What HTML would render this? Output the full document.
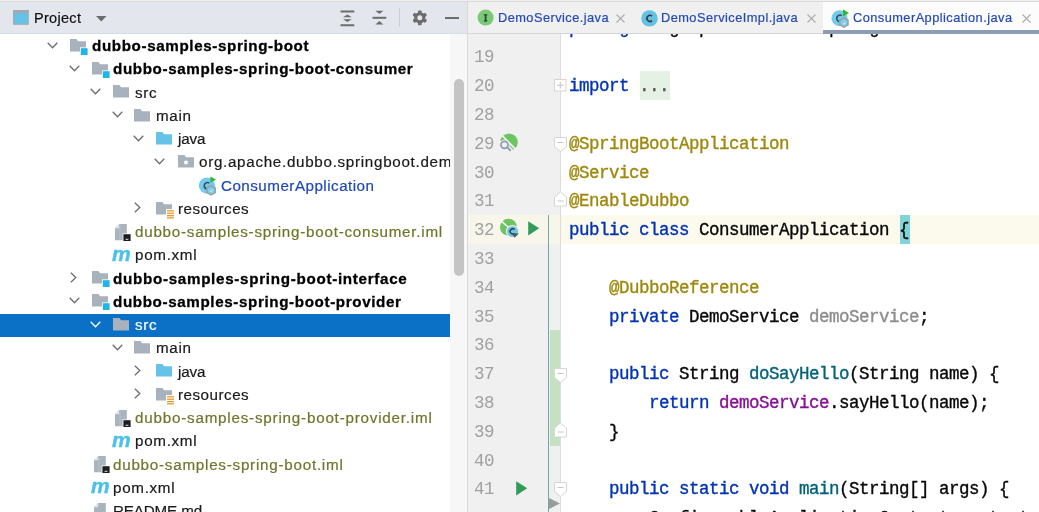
<!DOCTYPE html>
<html><head><meta charset="utf-8">
<style>
*{margin:0;padding:0;box-sizing:border-box}
.t,.cl,.ln,.tab{will-change:transform}
html,body{width:1039px;height:512px;overflow:hidden;background:#fff;font-family:"Liberation Sans",sans-serif}
.abs,.ic,.t{position:absolute}
#top{left:0;top:0;width:1039px;height:2px;background:#efefed;border-bottom:1px solid #d9d9d9}
#phead{left:0;top:2px;width:467px;height:32px;background:#e3e7ed;border-bottom:1px solid #d7dade}
#vdiv{left:467px;top:1px;width:1px;height:511px;background:#d9d9d9}
#tree{left:0;top:34px;width:467px;height:478px;background:#fff}
#track{left:450px;top:34px;width:17px;height:478px;background:#f7f7f7}
#thumb{left:453.6px;top:79px;width:10.6px;height:197px;background:#c4c4c4;border-radius:5.3px}
.t{height:23.2px;line-height:23.2px;font-size:15.2px;letter-spacing:0.7px;color:#1a1a1a;white-space:nowrap;margin-top:-0.8px;-webkit-text-stroke:0.2px currentColor}
.selbg{left:0;width:450px;height:23.25px;background:#0a71c6}
.t.w{color:#fff}
.t.b{font-weight:bold;letter-spacing:0.62px;color:#000;-webkit-text-stroke:0.3px currentColor}
.olive{color:#6f7529}
.blue{color:#1f48b8}
.mvn{font-family:"Liberation Sans",sans-serif;font-weight:bold;font-style:italic;font-size:21px;line-height:24px;color:#4bc0ea;letter-spacing:0;will-change:transform;-webkit-text-stroke:0.4px currentColor;margin-top:-0.5px}
#treeclip{left:0;top:34px;width:450px;height:478px;overflow:hidden}
#tabs{left:468px;top:2px;width:571px;height:32px;background:#f0f0f0;border-bottom:1px solid #d6d6d6}
.tab{position:absolute;top:1.8px;height:31px;font-size:12.8px;letter-spacing:0.45px;color:#2349b5;line-height:31px;white-space:nowrap;-webkit-text-stroke:0.2px currentColor}
#gutter{left:468px;top:34px;width:92.5px;height:478px;background:#f0f0f0}
#gline{left:560px;top:34px;width:1px;height:478px;background:#dcdcdc}
#code{left:561px;top:34px;width:478px;height:478px;background:#fff}
.cl{position:absolute;left:569.2px;width:520px;height:28.8px;line-height:28.8px;font-family:"Liberation Mono",monospace;font-size:17.5px;letter-spacing:-0.5px;white-space:pre;color:#080808;-webkit-text-stroke:0.35px currentColor;margin-top:-0.3px}
.ln{position:absolute;left:468px;width:26px;text-align:right;height:28.8px;line-height:28.8px;font-family:"Liberation Mono",monospace;font-size:17.5px;letter-spacing:-0.5px;color:#a0a0a0;margin-top:-0.3px}
.kw{color:#0033b3}
.an{color:#9e880d}
.fn{color:#00627a}
.fd{color:#871094}
.un{color:#8c8c8c}
.hic{position:absolute}
</style></head><body>
<!-- editor area -->
<div id="gutter" class="abs"></div>
<div id="code" class="abs"></div>
<div class="abs" style="left:468px;top:215.4px;width:571px;height:28.8px;background:#fcfaed"></div>
<div class="abs" style="left:468px;top:215.4px;width:92.5px;height:28.8px;background:#f8f6ea"></div>
<div id="gline" class="abs"></div>
<div class="abs" style="left:639.5px;top:71.4px;width:30px;height:28.8px;background:#e4f1e4"></div>
<div class="abs" style="left:900.2px;top:215.4px;width:10.1px;height:28.8px;background:#80d4d8"></div>

<div class="cl" style="top:14.1px"><span class="kw">package</span> org.apache.dubbo.springboot.demo.consumer;</div>
<div class="cl" style="top:72.4px"><span class="kw">import</span> <span style="color:#555">...</span></div>
<div class="cl an" style="top:130px">@SpringBootApplication</div>
<div class="cl an" style="top:158.8px">@Service</div>
<div class="cl an" style="top:187.6px">@EnableDubbo</div>
<div class="cl" style="top:216.4px"><span class="kw">public class</span> ConsumerApplication {</div>
<div class="cl" style="top:274px">    <span class="an">@DubboReference</span></div>
<div class="cl" style="top:302.8px">    <span class="kw">private</span> DemoService <span class="un">demoService</span>;</div>
<div class="cl" style="top:360.4px">    <span class="kw">public</span> String <span class="fn">doSayHello</span>(String name) {</div>
<div class="cl" style="top:389.2px">        <span class="kw">return</span> <span class="fd">demoService</span>.sayHello(name);</div>
<div class="cl" style="top:418px">    }</div>
<div class="cl" style="top:475.6px">    <span class="kw">public static void</span> <span class="fn">main</span>(String[] args) {</div>
<div class="cl" style="top:504.4px">        ConfigurableApplicationContext context = SpringApplication.run(ConsumerApplication.<span class="kw">class</span>, args);</div>

<div class="ln" style="top:43.6px">19</div>
<div class="ln" style="top:72.4px">20</div>
<div class="ln" style="top:101.2px">28</div>
<div class="ln" style="top:130px">29</div>
<div class="ln" style="top:158.8px">30</div>
<div class="ln" style="top:187.6px">31</div>
<div class="ln" style="top:216.4px">32</div>
<div class="ln" style="top:245.2px">33</div>
<div class="ln" style="top:274px">34</div>
<div class="ln" style="top:302.8px">35</div>
<div class="ln" style="top:331.6px">36</div>
<div class="ln" style="top:360.4px">37</div>
<div class="ln" style="top:389.2px">38</div>
<div class="ln" style="top:418px">39</div>
<div class="ln" style="top:446.8px">40</div>
<div class="ln" style="top:475.6px">41</div>

<!-- VCS markers -->
<div class="abs" style="left:548.2px;top:215px;width:1.3px;height:297px;background:#74a6b2"></div>
<div class="abs" style="left:549.5px;top:330.3px;width:10.7px;height:115.3px;background:#c6e0c2"></div>
<svg class="abs" style="left:549px;top:497.5px" width="12" height="12" viewBox="0 0 12 12"><path d="M0,0 L11,5.5 L0,11 Z" fill="#9b9b9b"/></svg>

<!-- fold markers -->
<svg class="abs" style="left:553.5px;top:78.9px" width="13" height="13" viewBox="0 0 13 13"><rect x="0.5" y="0.5" width="11.5" height="11.5" fill="#fff" stroke="#d6d6d6"/><path d="M3,6.25 H9.5 M6.25,3 V9.5" stroke="#c4c4c4" stroke-width="1"/></svg>
<svg class="abs fold-s" style="left:553.5px;top:137px" width="14" height="16" viewBox="0 0 14 16"><path d="M0.5,0.5 H12.5 V9.5 L6.5,14.5 L0.5,9.5 Z" fill="#fff" stroke="#d6d6d6"/><path d="M3.5,5.5 H9.5" stroke="#c4c4c4"/></svg>
<svg class="abs fold-e" style="left:553.5px;top:191px" width="14" height="16" viewBox="0 0 14 16"><path d="M0.5,15 H12.5 V6 L6.5,1 L0.5,6 Z" fill="#fff" stroke="#d6d6d6"/><path d="M3.5,10 H9.5" stroke="#c4c4c4"/></svg>
<svg class="abs fold-s" style="left:553.5px;top:367.5px" width="14" height="16" viewBox="0 0 14 16"><path d="M0.5,0.5 H12.5 V9.5 L6.5,14.5 L0.5,9.5 Z" fill="#fff" stroke="#d6d6d6"/><path d="M3.5,5.5 H9.5" stroke="#c4c4c4"/></svg>
<svg class="abs fold-e" style="left:553.5px;top:421.5px" width="14" height="16" viewBox="0 0 14 16"><path d="M0.5,15 H12.5 V6 L6.5,1 L0.5,6 Z" fill="#fff" stroke="#d6d6d6"/><path d="M3.5,10 H9.5" stroke="#c4c4c4"/></svg>
<svg class="abs fold-s" style="left:553.5px;top:482px" width="14" height="16" viewBox="0 0 14 16"><path d="M0.5,0.5 H12.5 V9.5 L6.5,14.5 L0.5,9.5 Z" fill="#fff" stroke="#d6d6d6"/><path d="M3.5,5.5 H9.5" stroke="#c4c4c4"/></svg>

<!-- gutter icons -->
<svg class="abs" style="left:499px;top:132.5px" width="20" height="19" viewBox="0 0 20 19">
<defs><clipPath id="sc1"><circle cx="0" cy="0" r="8.8"/></clipPath></defs>
<g clip-path="url(#sc1)" fill="#6cc561" transform="translate(10,9.2)">
<path d="M-12,-12.95 L12,11.05 L12,-13 L-12,-13 Z"/>
<path d="M-12,-10.1 L12,13.9 L12,15.4 L-12,-8.6 Z"/>
<path d="M-12,-10.1 L-4.2,-2.3 L-5.6,-1.2 L-12,-1.2 Z"/>
</g>
<g transform="translate(10,9.2)">
<circle cx="-4.5" cy="2.6" r="5.2" fill="#f0f0f0"/>
<path d="M-1.3,5.2 L1.6,8.3" stroke="#f0f0f0" stroke-width="3.6" stroke-linecap="round"/>

<circle cx="-4.5" cy="2.6" r="3.5" fill="none" stroke="#8e9aab" stroke-width="1.7"/>
<path d="M-1.8,5 L1.2,8.1" stroke="#8e9aab" stroke-width="1.9" stroke-linecap="round"/>
</g>
</svg>
<svg class="abs" style="left:499px;top:218px" width="21" height="21" viewBox="0 0 21 21">
<circle cx="9.5" cy="9.2" r="8.5" fill="#6cc561"/>
<path d="M1.8,2.6 L10.5,10.3" stroke="#f8f6ea" stroke-width="1.5" fill="none"/>
<circle cx="13.5" cy="13.5" r="6.6" fill="#f8f6ea"/>
<circle cx="13.5" cy="13.5" r="5.6" fill="#6cc8ea"/>
<path d="M15.6,11.6 A2.6,2.6 0 1 0 15.4,15.4" fill="none" stroke="#33424b" stroke-width="1.5"/>
<path d="M13,15.2 L19.8,15.6 L15.6,19.8 Z" fill="#555"/>
</svg>
<svg class="abs" style="left:528px;top:221px" width="12" height="15" viewBox="0 0 12 15"><path d="M0.2,0.3 L11.2,7.3 L0.2,14.6 Z" fill="#2f9d57"/></svg>
<svg class="abs" style="left:515.5px;top:481px" width="12" height="15" viewBox="0 0 12 15"><path d="M0.2,0.3 L11.2,7.3 L0.2,14.6 Z" fill="#2f9d57"/></svg>

<!-- tab bar -->
<div id="tabs" class="abs"></div>
<div class="abs" style="left:822.7px;top:2px;width:216.3px;height:31.5px;background:#fcfcfc"></div>
<div class="abs" style="left:822.7px;top:30px;width:216.3px;height:3.5px;background:#8d9cb2"></div>
<svg class="abs" style="left:476.5px;top:9px" width="18" height="18" viewBox="0 0 18 18"><circle cx="8.6" cy="8.6" r="8" fill="#78ca74"/><path d="M6.9,5.9 H10.3 M6.9,11.9 H10.3" stroke="#334033" stroke-width="1.3"/><path d="M8.6,5.6 V12.2" stroke="#334033" stroke-width="1.7"/></svg>
<div class="tab" style="left:497.9px">DemoService.java</div>
<svg class="abs" style="left:616.2px;top:13.6px" width="9" height="9" viewBox="0 0 9 9"><path d="M0.5,0.5 L8.5,8.5 M8.5,0.5 L0.5,8.5" stroke="#acacac" stroke-width="1.1"/></svg>
<svg class="abs" style="left:640.5px;top:9.5px" width="18" height="18" viewBox="0 0 18 18"><circle cx="8.5" cy="8.4" r="8.2" fill="#60c2e4"/><path d="M11,6.2 A3,3 0 1 0 11,10.6" fill="none" stroke="#3a3a3a" stroke-width="1.6"/></svg>
<div class="tab" style="left:661.2px">DemoServiceImpl.java</div>
<svg class="abs" style="left:807.1px;top:13.6px" width="9" height="9" viewBox="0 0 9 9"><path d="M0.5,0.5 L8.5,8.5 M8.5,0.5 L0.5,8.5" stroke="#acacac" stroke-width="1.1"/></svg>
<svg class="abs" style="left:831px;top:8.5px" width="20" height="20" viewBox="0 0 20 20">
<circle cx="8.5" cy="9.2" r="8" fill="#72ccef"/>
<path d="M10.8,6.6 A3.3,3.3 0 1 0 10.4,12.4" fill="none" stroke="#3a4a52" stroke-width="1.6"/>
<path d="M12,0.3 L17.9,3.9 L12,7.6 Z" fill="#35b52f"/>
<g transform="translate(12.9,13.6)"><path d="M0,-4.6 L4.1,-2.3 V2.3 L0,4.6 L-4.1,2.3 V-2.3 Z" fill="#7ad0ee" stroke="#9aa1a8" stroke-width="1.6"/>
<path d="M-1.2,0.6 L0,1.6 L1.8,-0.8" fill="none" stroke="#e8eef2" stroke-width="0.9"/></g>
</svg>
<div class="tab" style="left:853px">ConsumerApplication.java</div>
<svg class="abs" style="left:1022px;top:13.6px" width="9" height="9" viewBox="0 0 9 9"><path d="M0.5,0.5 L8.5,8.5 M8.5,0.5 L0.5,8.5" stroke="#acacac" stroke-width="1.1"/></svg>

<!-- project header -->
<div id="top" class="abs"></div>
<div id="phead" class="abs"></div>
<div id="vdiv" class="abs"></div>
<svg class="abs" style="left:12.8px;top:9.8px" width="17" height="16" viewBox="0 0 17 16"><rect x="0.6" y="0.6" width="14.6" height="13.6" fill="#62c4e8" stroke="#a3a9af" stroke-width="1.2"/><rect x="0.6" y="0.6" width="14.6" height="2.6" fill="#a3a9af"/></svg>
<div class="abs" style="left:34.3px;top:2.5px;height:31px;line-height:31px;font-size:14.5px;letter-spacing:0.3px;color:#111;will-change:transform;-webkit-text-stroke:0.2px currentColor">Project</div>
<svg class="abs" style="left:96.2px;top:15.6px" width="11" height="6" viewBox="0 0 11 6"><path d="M0,0 H10.5 L5.25,5.6 Z" fill="#6c6c6c"/></svg>
<svg class="abs" style="left:340px;top:9.5px" width="15" height="17" viewBox="0 0 15 17"><path d="M0.5,1.4 H14.3 M0.5,15.2 H14.3" stroke="#6c6c6c" stroke-width="2"/><path d="M3,7.3 L7.4,4.6 L11.8,7.3 Z M3,9.3 L7.4,12 L11.8,9.3 Z" fill="#6c6c6c"/></svg>
<svg class="abs" style="left:371.5px;top:10px" width="15" height="16" viewBox="0 0 15 16"><path d="M0.5,7.8 H14.3" stroke="#6c6c6c" stroke-width="2"/><path d="M3.4,0.8 L7.4,4.1 L11.4,0.8 Z M3.4,14.6 L7.4,11 L11.4,14.6 Z" fill="#6c6c6c"/></svg>
<div class="abs" style="left:399px;top:7.5px;width:1px;height:19.5px;background:#cbcfd5"></div>
<svg class="abs" style="left:412px;top:10px" width="16" height="16" viewBox="0 0 16 16"><g fill="#6c6c6c" transform="translate(7.8,7.8)"><circle r="5.6"/><rect x="-1.8" y="-7.4" width="3.6" height="14.8" rx="0.8"/><rect x="-1.8" y="-7.4" width="3.6" height="14.8" rx="0.8" transform="rotate(60)"/><rect x="-1.8" y="-7.4" width="3.6" height="14.8" rx="0.8" transform="rotate(120)"/></g><circle cx="7.8" cy="7.8" r="2.5" fill="#e3e7ed"/></svg>
<div class="abs" style="left:444.5px;top:16.8px;width:14.2px;height:2.3px;background:#6c6c6c"></div>

<!-- tree -->
<div id="tree" class="abs"></div>
<div id="treeclip" class="abs">
<div class="abs" style="left:0;top:-34px;width:450px;height:512px">
<svg class="ic" style="left:47.2px;top:41.58px" width="11" height="7" viewBox="0 0 11 7"><polyline points="0.7,0.8 5.5,5.8 10.3,0.8" fill="none" stroke="#6e6e6e" stroke-width="1.3"/></svg>
<svg class="ic" style="left:70.30000000000001px;top:39.27px" width="18" height="17" viewBox="0 0 18 17"><path d="M0,0 H6.5 L8,2.2 H16 V12.6 H0 Z" fill="#a8b2bc"/><rect x="10" y="8.4" width="7.6" height="7.6" fill="#fff"/><rect x="10.8" y="9.2" width="6.8" height="6.8" fill="#20b4e8"/></svg>
<div class="t b" style="left:91.90px;top:34.95px">dubbo-samples-spring-boot</div>
<svg class="ic" style="left:68.64px;top:64.83px" width="11" height="7" viewBox="0 0 11 7"><polyline points="0.7,0.8 5.5,5.8 10.3,0.8" fill="none" stroke="#6e6e6e" stroke-width="1.3"/></svg>
<svg class="ic" style="left:91.74000000000001px;top:61.73px" width="18" height="17" viewBox="0 0 18 17"><path d="M0,0 H6.5 L8,2.2 H16 V12.6 H0 Z" fill="#a8b2bc"/><rect x="10" y="8.4" width="7.6" height="7.6" fill="#fff"/><rect x="10.8" y="9.2" width="6.8" height="6.8" fill="#20b4e8"/></svg>
<div class="t b" style="left:113.34px;top:58.20px">dubbo-samples-spring-boot-consumer</div>
<svg class="ic" style="left:90.08px;top:88.08px" width="11" height="7" viewBox="0 0 11 7"><polyline points="0.7,0.8 5.5,5.8 10.3,0.8" fill="none" stroke="#6e6e6e" stroke-width="1.3"/></svg>
<svg class="ic" style="left:112.88px;top:85.28px" width="18" height="15" viewBox="0 0 18 15"><path d="M0,0 H6.5 L8,2.2 H16 V12.6 H0 Z" fill="#a8b2bc"/></svg>
<div class="t" style="left:134.78px;top:81.45px">src</div>
<svg class="ic" style="left:111.52000000000002px;top:111.33px" width="11" height="7" viewBox="0 0 11 7"><polyline points="0.7,0.8 5.5,5.8 10.3,0.8" fill="none" stroke="#6e6e6e" stroke-width="1.3"/></svg>
<svg class="ic" style="left:134.32000000000002px;top:108.53px" width="18" height="15" viewBox="0 0 18 15"><path d="M0,0 H6.5 L8,2.2 H16 V12.6 H0 Z" fill="#a8b2bc"/></svg>
<div class="t" style="left:156.22px;top:104.70px">main</div>
<svg class="ic" style="left:132.96000000000004px;top:134.57px" width="11" height="7" viewBox="0 0 11 7"><polyline points="0.7,0.8 5.5,5.8 10.3,0.8" fill="none" stroke="#6e6e6e" stroke-width="1.3"/></svg>
<svg class="ic" style="left:156.16000000000003px;top:131.77px" width="18" height="15" viewBox="0 0 18 15"><path d="M0,0 H6.5 L8,2.2 H16 V12.6 H0 Z" fill="#66c2e8"/></svg>
<div class="t" style="left:177.66px;top:127.95px;letter-spacing:-0.1px">java</div>
<svg class="ic" style="left:154.40000000000003px;top:157.82px" width="11" height="7" viewBox="0 0 11 7"><polyline points="0.7,0.8 5.5,5.8 10.3,0.8" fill="none" stroke="#6e6e6e" stroke-width="1.3"/></svg>
<svg class="ic" style="left:177.50000000000003px;top:155.02px" width="18" height="15" viewBox="0 0 18 15"><path d="M0,0 H6.5 L8,2.2 H16 V12.6 H0 Z" fill="#a8b2bc"/><circle cx="8" cy="7.4" r="2" fill="#fff"/></svg>
<div class="t" style="left:199.10px;top:151.20px">org.apache.dubbo.springboot.demo.consumer</div>
<svg class="ic" style="left:198.94000000000003px;top:175.57px" width="19" height="20" viewBox="0 0 19 20"><circle cx="8" cy="9.6" r="8.1" fill="#72ccef"/><path d="M10.3,7 A3.3,3.3 0 1 0 9.9,12.8" fill="none" stroke="#3a4a52" stroke-width="1.6"/><path d="M11.4,0.5 L17,3.6 L11.4,6.7 Z" fill="#35b52f"/><g transform="translate(12.1,14.3)"><path d="M0,-4.6 L4.1,-2.3 V2.3 L0,4.6 L-4.1,2.3 V-2.3 Z" fill="#7ad0ee" stroke="#9aa1a8" stroke-width="1.6"/><path d="M-1.2,0.6 L0,1.6 L1.8,-0.8" fill="none" stroke="#e8eef2" stroke-width="0.9"/></g></svg>
<div class="t blue" style="left:220.54px;top:174.45px;letter-spacing:0.48px">ConsumerApplication</div>
<svg class="ic" style="left:133.86px;top:202.32px" width="7" height="11" viewBox="0 0 7 11"><polyline points="0.8,0.7 5.8,5.5 0.8,10.3" fill="none" stroke="#6e6e6e" stroke-width="1.3"/></svg>
<svg class="ic" style="left:155.76000000000002px;top:201.52px" width="18" height="17" viewBox="0 0 18 17"><path d="M0,0 H6.5 L8,2.2 H16 V12.6 H0 Z" fill="#a8b2bc"/><rect x="10" y="7" width="8" height="9" fill="#fff"/><rect x="11" y="8.2" width="7" height="1.3" fill="#e59c2e"/><rect x="11" y="10.6" width="7" height="1.3" fill="#e59c2e"/><rect x="11" y="13" width="7" height="1.3" fill="#e59c2e"/><rect x="11" y="15.2" width="7" height="1.3" fill="#e59c2e"/></svg>
<div class="t" style="left:177.66px;top:197.70px;letter-spacing:0.5px">resources</div>
<svg class="ic" style="left:115.38px;top:223.77px" width="17" height="18" viewBox="0 0 17 18"><path d="M4.2,0 H11.8 V16.3 H0 V4.2 Z" fill="#a9b4be"/><path d="M0,4.2 L4.2,0 V4.2 Z" fill="#dfe4e8"/><path d="M5,0.5 V16" stroke="#c3ccd3" stroke-width="0.6"/><rect x="7.6" y="9.4" width="8.8" height="8.4" fill="#fff"/><rect x="8.4" y="10.2" width="7.2" height="6.8" fill="#1e1e1e"/><rect x="10.6" y="14.8" width="2.8" height="0.9" fill="#fff"/></svg>
<div class="t olive" style="left:134.78px;top:220.95px;letter-spacing:0.75px">dubbo-samples-spring-boot-consumer.iml</div>
<div class="ic mvn" style="left:112.28px;top:242.32px">m</div>
<div class="t" style="left:134.78px;top:244.20px">pom.xml</div>
<svg class="ic" style="left:69.54px;top:272.07px" width="7" height="11" viewBox="0 0 7 11"><polyline points="0.8,0.7 5.8,5.5 0.8,10.3" fill="none" stroke="#6e6e6e" stroke-width="1.3"/></svg>
<svg class="ic" style="left:91.74000000000001px;top:270.97px" width="18" height="17" viewBox="0 0 18 17"><path d="M0,0 H6.5 L8,2.2 H16 V12.6 H0 Z" fill="#a8b2bc"/><rect x="10" y="8.4" width="7.6" height="7.6" fill="#fff"/><rect x="10.8" y="9.2" width="6.8" height="6.8" fill="#20b4e8"/></svg>
<div class="t b" style="left:113.34px;top:267.45px;letter-spacing:0.7px">dubbo-samples-spring-boot-interface</div>
<svg class="ic" style="left:68.64px;top:297.32px" width="11" height="7" viewBox="0 0 11 7"><polyline points="0.7,0.8 5.5,5.8 10.3,0.8" fill="none" stroke="#6e6e6e" stroke-width="1.3"/></svg>
<svg class="ic" style="left:91.74000000000001px;top:294.22px" width="18" height="17" viewBox="0 0 18 17"><path d="M0,0 H6.5 L8,2.2 H16 V12.6 H0 Z" fill="#a8b2bc"/><rect x="10" y="8.4" width="7.6" height="7.6" fill="#fff"/><rect x="10.8" y="9.2" width="6.8" height="6.8" fill="#20b4e8"/></svg>
<div class="t b" style="left:113.34px;top:290.70px">dubbo-samples-spring-boot-provider</div>
<div class="abs selbg" style="top:313.95px"></div>
<svg class="ic" style="left:90.08px;top:320.57px" width="11" height="7" viewBox="0 0 11 7"><polyline points="0.7,0.8 5.5,5.8 10.3,0.8" fill="none" stroke="#ffffff" stroke-width="1.3"/></svg>
<svg class="ic" style="left:112.88px;top:317.77px" width="18" height="15" viewBox="0 0 18 15"><path d="M0,0 H6.5 L8,2.2 H16 V12.6 H0 Z" fill="#a8b2bc"/></svg>
<div class="t w" style="left:134.78px;top:313.95px">src</div>
<svg class="ic" style="left:111.52000000000002px;top:343.82px" width="11" height="7" viewBox="0 0 11 7"><polyline points="0.7,0.8 5.5,5.8 10.3,0.8" fill="none" stroke="#6e6e6e" stroke-width="1.3"/></svg>
<svg class="ic" style="left:134.32000000000002px;top:341.02px" width="18" height="15" viewBox="0 0 18 15"><path d="M0,0 H6.5 L8,2.2 H16 V12.6 H0 Z" fill="#a8b2bc"/></svg>
<div class="t" style="left:156.22px;top:337.20px">main</div>
<svg class="ic" style="left:133.86px;top:365.07px" width="7" height="11" viewBox="0 0 7 11"><polyline points="0.8,0.7 5.8,5.5 0.8,10.3" fill="none" stroke="#6e6e6e" stroke-width="1.3"/></svg>
<svg class="ic" style="left:156.16000000000003px;top:364.27px" width="18" height="15" viewBox="0 0 18 15"><path d="M0,0 H6.5 L8,2.2 H16 V12.6 H0 Z" fill="#66c2e8"/></svg>
<div class="t" style="left:177.66px;top:360.45px;letter-spacing:-0.1px">java</div>
<svg class="ic" style="left:133.86px;top:388.32px" width="7" height="11" viewBox="0 0 7 11"><polyline points="0.8,0.7 5.8,5.5 0.8,10.3" fill="none" stroke="#6e6e6e" stroke-width="1.3"/></svg>
<svg class="ic" style="left:155.76000000000002px;top:387.52px" width="18" height="17" viewBox="0 0 18 17"><path d="M0,0 H6.5 L8,2.2 H16 V12.6 H0 Z" fill="#a8b2bc"/><rect x="10" y="7" width="8" height="9" fill="#fff"/><rect x="11" y="8.2" width="7" height="1.3" fill="#e59c2e"/><rect x="11" y="10.6" width="7" height="1.3" fill="#e59c2e"/><rect x="11" y="13" width="7" height="1.3" fill="#e59c2e"/><rect x="11" y="15.2" width="7" height="1.3" fill="#e59c2e"/></svg>
<div class="t" style="left:177.66px;top:383.70px;letter-spacing:0.5px">resources</div>
<svg class="ic" style="left:115.38px;top:409.77px" width="17" height="18" viewBox="0 0 17 18"><path d="M4.2,0 H11.8 V16.3 H0 V4.2 Z" fill="#a9b4be"/><path d="M0,4.2 L4.2,0 V4.2 Z" fill="#dfe4e8"/><path d="M5,0.5 V16" stroke="#c3ccd3" stroke-width="0.6"/><rect x="7.6" y="9.4" width="8.8" height="8.4" fill="#fff"/><rect x="8.4" y="10.2" width="7.2" height="6.8" fill="#1e1e1e"/><rect x="10.6" y="14.8" width="2.8" height="0.9" fill="#fff"/></svg>
<div class="t olive" style="left:134.78px;top:406.95px;letter-spacing:0.79px">dubbo-samples-spring-boot-provider.iml</div>
<div class="ic mvn" style="left:112.28px;top:428.32px">m</div>
<div class="t" style="left:134.78px;top:430.20px">pom.xml</div>
<svg class="ic" style="left:93.94px;top:456.27px" width="17" height="18" viewBox="0 0 17 18"><path d="M4.2,0 H11.8 V16.3 H0 V4.2 Z" fill="#a9b4be"/><path d="M0,4.2 L4.2,0 V4.2 Z" fill="#dfe4e8"/><path d="M5,0.5 V16" stroke="#c3ccd3" stroke-width="0.6"/><rect x="7.6" y="9.4" width="8.8" height="8.4" fill="#fff"/><rect x="8.4" y="10.2" width="7.2" height="6.8" fill="#1e1e1e"/><rect x="10.6" y="14.8" width="2.8" height="0.9" fill="#fff"/></svg>
<div class="t olive" style="left:113.34px;top:453.45px;letter-spacing:0.76px">dubbo-samples-spring-boot.iml</div>
<div class="ic mvn" style="left:90.84px;top:474.82px">m</div>
<div class="t" style="left:113.34px;top:476.70px">pom.xml</div>
<svg class="ic" style="left:93.94px;top:502.77px" width="17" height="17" viewBox="0 0 17 17"><path d="M4.2,0 H11.8 V16.3 H0 V4.2 Z" fill="#a9b4be"/><path d="M0,4.2 L4.2,0 V4.2 Z" fill="#dfe4e8"/><rect x="2.5" y="9.5" width="7" height="1.6" fill="#5a6168"/></svg>
<div class="t" style="left:113.34px;top:499.95px;letter-spacing:-0.15px">README.md</div>
</div>
</div>
<div id="track" class="abs"></div>
<div id="thumb" class="abs"></div>
</body></html>
